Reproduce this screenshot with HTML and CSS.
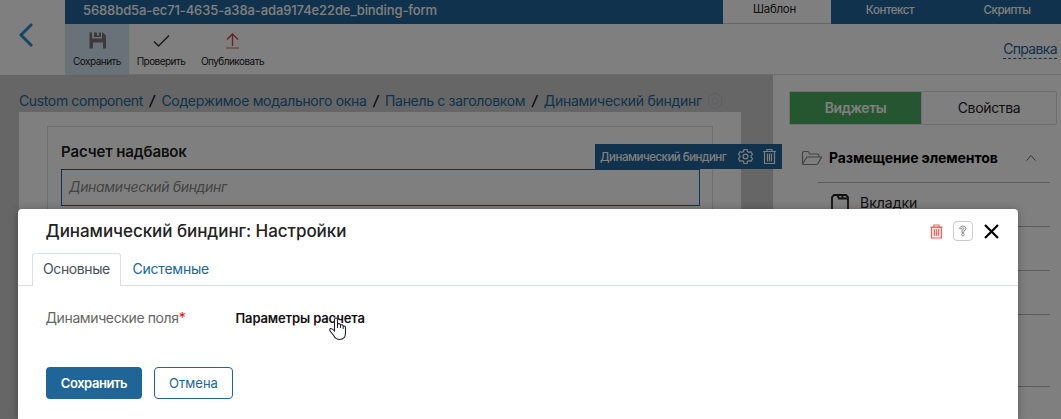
FILE: index.html
```html
<!DOCTYPE html>
<html lang="ru">
<head>
<meta charset="utf-8">
<title>Динамический биндинг: Настройки</title>
<link rel="stylesheet" href="styles.css">
</head>
<body>
<div class="app">
  <header class="header">
    <div class="back"><svg width="16" height="26" viewBox="0 0 16 26"><path d="M14 2 3 13l11 11" fill="none" stroke="#2e8fca" stroke-width="3"/></svg></div>
    <div class="header-main">
      <div class="topbar">
        <div class="doc-name"><span>5688bd5a-ec71-4635-a38a-ada9174e22de_binding-form</span></div>
        <nav class="modes">
          <a class="mode mode-active"><span>Шаблон</span></a>
          <a class="mode mode-mid"><span>Контекст</span></a>
          <a class="mode mode-last"><span>Скрипты</span></a>
        </nav>
      </div>
      <div class="toolbar">
        <button class="tool tool-save">
          <svg width="17" height="17" viewBox="0 0 17 17"><path d="M.5.5H3v6h10V.5h1l3 3v13h-3v-6H4v6H.5z" fill="#777"/><path d="M5 .5h3v3h2v-3h2V5H5z" fill="#777"/></svg>
          <span>Сохранить</span></button>
        <button class="tool tool-check">
          <svg width="17" height="17" viewBox="0 0 17 17"><path d="M1 9.5 5.5 14 16 3.5" fill="none" stroke="#333" stroke-width="1.4"/></svg>
          <span>Проверить</span></button>
        <button class="tool tool-publish">
          <svg width="17" height="17" viewBox="0 0 17 17"><path d="M8.5 14V2M3 7.5 8.5 2 14 7.5" fill="none" stroke="#d2433f" stroke-width="1.3"/><path d="M2 16h13" stroke="#df807c" stroke-width="1.3"/></svg>
          <span>Опубликовать</span></button>
        <a class="help"><span>Справка</span></a>
      </div>
    </div>
  </header>
  <div class="workspace">
    <main class="canvas">
      <div class="crumbs">
        <a class="c1">Custom component</a><i>/</i><a class="c2">Содержимое модального окна</a><i>/</i><a class="c3">Панель с заголовком</a><i>/</i><a class="c4">Динамический биндинг</a>
        <svg class="ghost" width="18" height="18" viewBox="0 0 18 18" fill="none" stroke="#bdbdd0"><path d="m9 1 6.5 4v8L9 17l-6.500-4V5z"/><circle cx="9" cy="9" r="3"/></svg>
      </div>
      <div class="sheet">
        <section class="panel">
          <h2><span>Расчет надбавок</span></h2>
          <div class="field"><span>Динамический биндинг</span>
            <div class="field-tag"><span>Динамический биндинг</span>
              <svg class="gear" width="17" height="17" viewBox="0 0 17 17" fill="none" stroke="#fff" stroke-width="1.2"><path d="m7 1.500h3l.5 2 1.500.8 2-.6 1.500 2.600-1.400 1.400v1.600l1.400 1.400-1.500 2.600-2-.6-1.500.8-.5 2H7l-.5-2-1.500-.8-2 .6-1.500-2.600 1.400-1.400V7.700L1.500 6.300 3 3.700l2 .6 1.500-.8z"/><circle cx="8.500" cy="8.500" r="2.400"/></svg>
              <svg width="15" height="17" viewBox="0 0 15 17" fill="none" stroke="#fff" stroke-width="1.200"><path d="M1 3.500h13M5 3.500v-2h5v2M2.500 3.500v12h10v-12M5.500 5.500v8M7.500 5.500v8M9.500 5.500v8"/></svg>
            </div>
          </div>
        </section>
      </div>
    </main>
    <aside class="sidebar">
      <div class="switch"><div class="switch-on"><span>Виджеты</span></div><div class="switch-off"><span>Свойства</span></div></div>
      <div class="group">
        <svg width="22" height="16" viewBox="0 0 22 16" fill="none" stroke="#858585" stroke-width="1.200"><path d="M1.500 14.500V3Q1.500 1.500 3 1.500h4l2 2.500h7.500q1.500 0 1.500 1.500V7M1.500 14 5 8.200Q5.700 7 7 7h13.500L17 13.500q-.6 1-2 1H1.500"/></svg>
        <b>Размещение элементов</b>
        <svg class="chevron" width="12" height="8" viewBox="0 0 12 8"><path d="m1.500 6.500 4.500-5 4.500 5" fill="none" stroke="#666"/></svg>
      </div>
      <ul class="widgets">
        <li class="first"><svg width="18" height="18" viewBox="0 0 18 18" fill="none" stroke="#222" stroke-width="1.800"><path d="M3 1h12l2 2v12l-2 2H3l-2-2V3zM6.500 1.500 8 4.500h8.500M11 1.500l1 3"/></svg><span>Вкладки</span></li>
        <li></li><li></li><li class="tall"></li>
      </ul>
    </aside>
  </div>
</div>
<div class="backdrop">
  <section class="modal">
    <div class="modal-head">
      <h1><span>Динамический биндинг: Настройки</span></h1>
      <div class="modal-actions">
        <svg width="13" height="15" viewBox="0 0 13 15" fill="none" stroke="#ee6661" stroke-width="1.200"><path d="M1.500 3.500h10V14h-10z" fill="#fde5e4"/><path d="M.5 3.200h12M4 3V1h5v2M4.500 5.200v6.600M6.500 5.200v6.600M8.500 5.200v6.600"/></svg>
        <div class="hint"><svg width="10" height="12" viewBox="0 0 10 12" fill="none" stroke="#777" stroke-width=".8"><path d="M1.500 3.500Q2 1 4.800 1 8 1 8 3.700 8 5 5.800 6v1.500H4V5.200Q6 4.500 6 3.600T4.700 2.800 3.500 4z"/><circle cx="4.900" cy="9.700" r="1.300"/></svg></div>
        <svg width="17" height="17" viewBox="0 0 17 17"><path d="m2 2 13 13M15 2 2 15" stroke="#000" stroke-width="2.200"/></svg>
      </div>
    </div>
    <nav class="tabs"><a class="tab tab-active"><span>Основные</span></a><a class="tab"><span>Системные</span></a></nav>
    <div class="row"><label><span>Динамические поля</span><em>*</em></label><div class="value"><span>Параметры расчета</span>
      <svg class="pointer" width="20" height="26" viewBox="0 0 20 26"><path d="M6.500 14V3.500Q6.500 2 8 2t1.500 1.500V8Q12 7 12.500 9q2-.8 2.700 1 2.300-.4 2.300 1.500V17Q17.500 23.500 11.500 23.500 8 23.500 6 20L2.500 15.500Q1 13.500 2.500 12.500 4 12 6.500 15z" fill="#fff" stroke="#1d1d35" stroke-width="1.100"/><path d="M9.500 8v4M12.500 9v3M15.200 10v3" stroke="#1d1d35"/></svg></div></div>
    <div class="buttons"><button class="btn primary"><span>Сохранить</span></button><button class="btn outline"><span>Отмена</span></button></div>
  </section>
</div>
</body>
</html>
```
FILE: styles.css
```css
* { box-sizing: border-box; }
body { margin: 0; width: 1061px; height: 419px; overflow: hidden; font: 14px/20px Inter, "Noto Sans", sans-serif; color: #222; }
button { font: inherit; border: 0; padding: 0; background: none; color: inherit; }
svg { display: block; flex: none; }
span { white-space: nowrap; }
.app { height: 419px; display: flex; flex-direction: column; background: #fff; }
.header { display: flex; height: 75px; flex: none; }
.back { width: 65px; padding: 22px 0 0 18px; }
.header-main { flex: 1; display: flex; flex-direction: column; }
.topbar { height: 25px; display: flex; background: #206598; color: #fff; font-size: 13px; font-weight: 500; }
.doc-name { flex: 1; padding-left: 18px; letter-spacing: -.1px; }
.modes { display: flex; font-size: 11.5px; letter-spacing: -.42px; }
.mode { width: 108px; text-align: center; }
.mode-active { background: #fff; color: #222; font-weight: 400; border-bottom: 1px solid #ccc; line-height: 18px; padding-right: 5px; letter-spacing: -.3px; }
.mode-mid { padding-left: 10px; }
.mode-last { width: 122px; padding-left: 14px; }
.toolbar { flex: 1; display: flex; border-bottom: 1px solid #ddd; font-size: 10px; letter-spacing: -.53px; }
.tool { display: flex; flex-direction: column; align-items: center; padding-top: 8px; line-height: 12px; gap: 6px; letter-spacing: inherit; }
.tool-save { width: 64px; height: 50px; background: #d3e5f1; }
.tool-check { width: 64px; }
.tool-publish { width: 79px; }
.help { margin: 15px 4px 0 auto; height: 20px; border-bottom: 1px dashed #206598; color: #206598; font-size: 14px; letter-spacing: -.65px; }
.workspace { flex: 1; min-height: 0; display: flex; }
.canvas { width: 773px; background: #ccc; padding: 16px 32px 0 19px; display: flex; flex-direction: column; }
.crumbs { height: 21px; display: flex; align-items: center; color: #206598; white-space: nowrap; padding-bottom: 2px; }
.c1 { letter-spacing: -.37px; }
.c2, .c3 { letter-spacing: -.32px; }
.c4 { letter-spacing: -.27px; }
.crumbs i { color: #000; width: 18.500px; text-align: center; font-size: 14px; font-weight: 500; }
.ghost { margin-left: 4px; }
.sheet { flex: 1; background: #fff; padding: 14px 28px 0; display: flex; }
.panel { flex: 1; border: 1px solid #ddd; border-bottom: 0; padding: 15px 12px 0 13px; }
h2 { margin: 0 0 7px; font-size: 15px; line-height: 20px; font-weight: 600; letter-spacing: -.12px; }
.field { position: relative; height: 37px; border: 1px solid #206598; padding: 7px; font-style: italic; color: #888; letter-spacing: -.33px; }
.field-tag { position: absolute; right: -83px; top: -26px; width: 187px; height: 25px; background: #206598; display: flex; align-items: center; color: #fff; font-style: normal; font-weight: 500; font-size: 11.5px; letter-spacing: -.5px; padding: 0 5px; }
.gear { margin: 0 8px 0 auto; }
.sidebar { width: 288px; padding: 16px 0; overflow: hidden; }
.switch { display: flex; width: 268px; height: 34px; margin-left: 16px; border: 1px solid #ddd; border-radius: 2px; line-height: 32px; text-align: center; }
.switch-on { width: 131px; background: #4dad60; color: #fff; font-weight: 600; letter-spacing: -.5px; }
.switch-off { flex: 1; border-left: 1px solid #ddd; letter-spacing: -.35px; }
.group { display: flex; align-items: center; height: 57px; padding: 9px 24px 0 28px; color: #000; }
.group b { font-weight: 700; margin-left: 6px; white-space: nowrap; letter-spacing: -.1px; }
.chevron { margin-left: auto; }
.widgets { list-style: none; margin: 0 11px 0 45px; padding: 0; border-top: 1px solid #bbb; }
.widgets li { height: 44px; border-bottom: 1px solid #bbb; display: flex; align-items: center; gap: 11px; padding-left: 13px; }
.widgets .first { padding-bottom: 3px; }
.widgets .tall { height: 72px; }
.backdrop { position: absolute; inset: 0; background: rgba(0,0,0,.5); padding: 209px 43px 0 18px; overflow: hidden; }
.modal { height: 210px; background: #fff; border-radius: 4px 4px 0 0; box-shadow: 0 1px 8px rgba(0,0,0,.3); }
.modal-head { height: 44px; display: flex; padding: 0 18px 0 27.500px; align-items: center; }
h1 { margin: 0; font-size: 17px; font-weight: 500; line-height: 24px; letter-spacing: -.05px; }
.modal-actions { margin-left: auto; display: flex; align-items: center; gap: 10px; }
.hint { width: 20px; height: 20px; border: 1px solid #ccc; border-radius: 4px; display: flex; align-items: center; justify-content: center; }
.tabs { height: 33px; border-bottom: 1px solid #dadfe3; padding-left: 14px; display: flex; color: #206598; }
.tab { height: 33px; padding: 6px 11.500px; letter-spacing: -.22px; }
.tab-active { width: 89px; padding: 5px 10px; background: #fff; border: 1px solid #dadfe3; border-bottom: 0; border-radius: 3px 3px 0 0; color: #495057; letter-spacing: -.4px; }
.row { display: flex; margin: 22px 0 0 27.500px; height: 20px; }
.row label { width: 190px; color: #666; white-space: nowrap; letter-spacing: -.38px; }
.row em { color: #f00; font-style: normal; }
.value { position: relative; color: #111; font-weight: 600; font-size: 13px; letter-spacing: -.14px; }
.pointer { position: absolute; left: 92.500px; top: 8px; }
.buttons { display: flex; gap: 12px; margin: 39px 0 0 28px; }
.btn { height: 32px; border-radius: 4px; font-size: 13px; }
.primary { width: 96px; background: #206598; color: #fff; font-weight: 600; letter-spacing: -.45px; }
.outline { width: 79px; border: 1px solid #206598; color: #206598; }
```
